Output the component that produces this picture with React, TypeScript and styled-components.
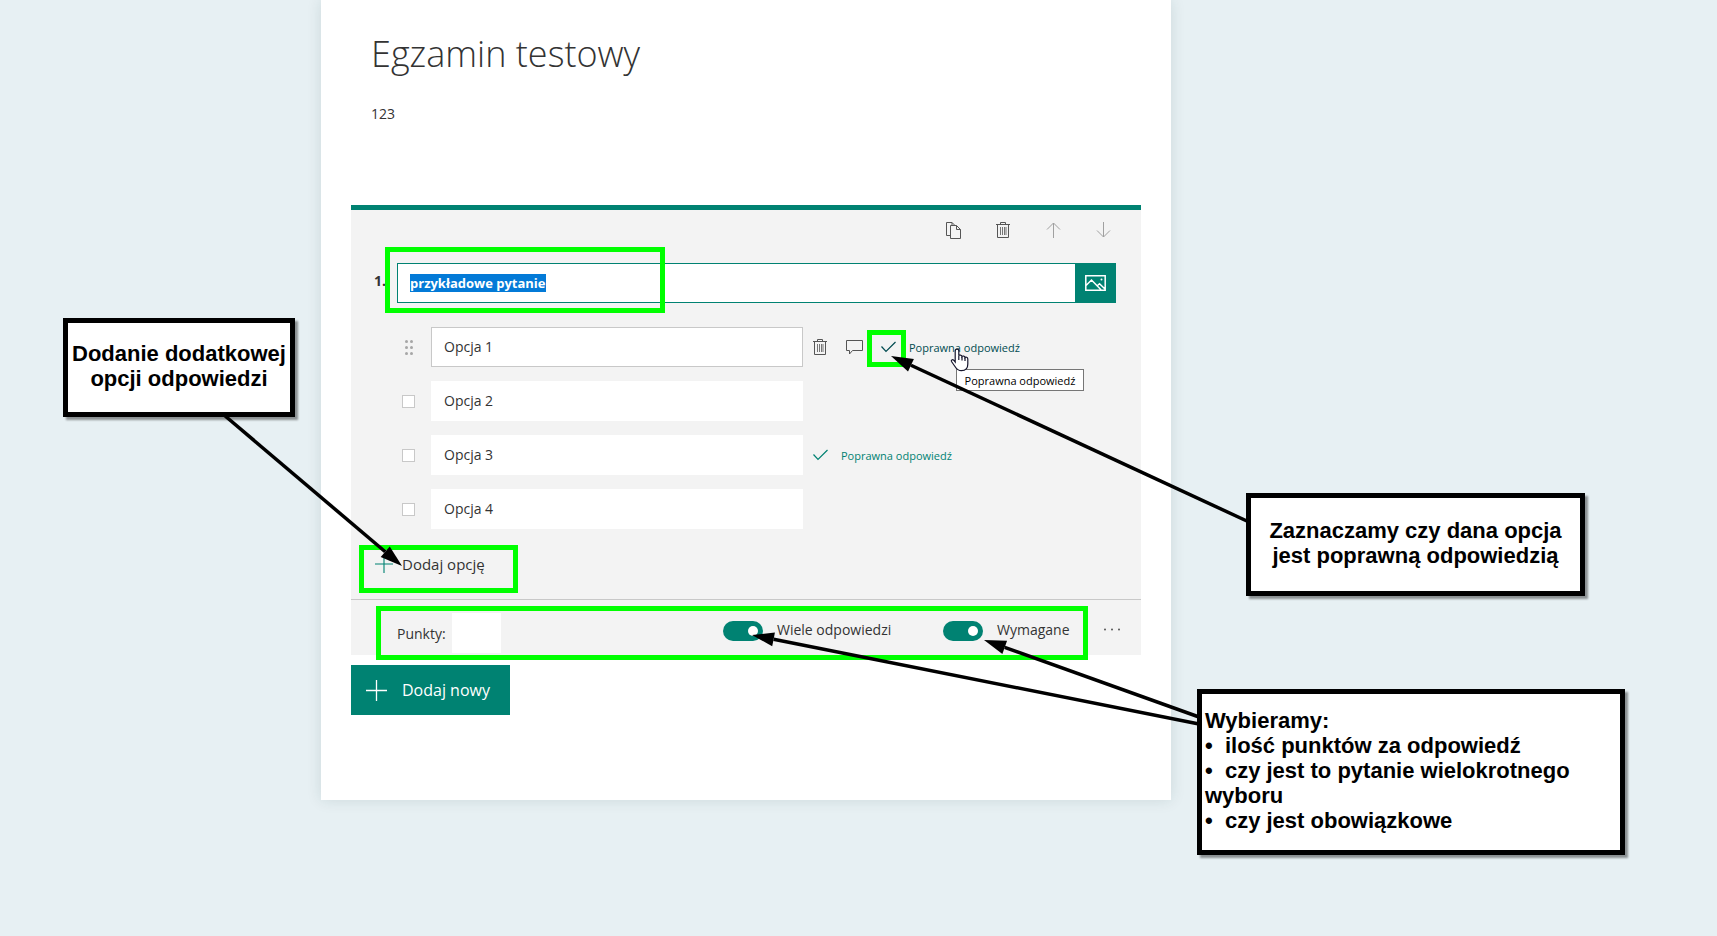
import React, { useEffect, useRef } from "react";
import styled, { createGlobalStyle, css } from "styled-components";

const teal = "#008272";
const ui = '"Open Sans", "Noto Sans", sans-serif';

const GlobalStyle = createGlobalStyle`
  *, *::before, *::after { box-sizing: border-box; }
  body {
    margin: 0;
    background: #e7f0f3;
    color: #333333;
    font-family: ${ui};
    font-size: 14px;
  }
  button, input { font: inherit; color: inherit; }
`;

const Page = styled.div`
  display: grid;
  grid-template-columns: minmax(0, 321fr) minmax(640px, 850px) minmax(0, 546fr);
  min-height: 100vh;
  align-items: start;
  overflow: hidden;
`;

const Paper = styled.main`
  grid-column: 2;
  position: relative;
  padding: 0 30px 85px;
  background: #ffffff;
  box-shadow: 0 0 14px rgba(0, 60, 60, 0.12);
`;

const FormHeader = styled.header`
  height: 205px;
  padding: 26px 20px 0;
`;

const Title = styled.h1`
  margin: 0;
  font-size: 36px;
  line-height: 56px;
  font-weight: 300;
`;

const Description = styled.p`
  margin: 20px 0 0;
  line-height: 24px;
`;

const Card = styled.section`
  border-top: 5px solid ${teal};
  background: #f3f3f3;
`;

const PlainButton = styled.button`
  display: inline-flex;
  align-items: center;
  justify-content: center;
  padding: 0;
  border: 0;
  background: transparent;
  cursor: pointer;
`;

const Toolbar = styled.div`
  display: flex;
  justify-content: flex-end;
  padding: 5px 13px 18px;
`;

const ToolButton = styled(PlainButton)`
  width: 50px;
  height: 30px;
  color: #555555;
  &:disabled { color: #a0a0a0; }
`;

const QuestionRow = styled.div`
  display: flex;
  padding-right: 25px;
`;

const QuestionNumber = styled.label`
  flex: 0 0 46px;
  padding-left: 23px;
  line-height: 36px;
  font-weight: 700;
`;

const QuestionInput = styled.input`
  flex: 1;
  min-width: 0;
  height: 40px;
  padding: 0 12px;
  border: 1px solid ${teal};
  border-right: 0;
  border-radius: 0;
  outline: 0;
  background: #ffffff;
  font-size: 13px;
  font-weight: 700;
  &::selection { background: rgba(0, 120, 215, 0.99); color: #ffffff; }
`;

const ImageButton = styled(PlainButton)`
  flex: 0 0 41px;
  height: 40px;
  background: ${teal};
  color: #ffffff;
`;

const Options = styled.ul`
  display: grid;
  gap: 14px;
  margin: 24px 0 0;
  padding: 0 0 0 51px;
  list-style: none;
`;

const OptionRow = styled.li`
  display: flex;
  align-items: center;
`;

const Handle = styled.span`
  display: flex;
  justify-content: center;
  flex: 0 0 13px;
  margin-right: 16px;
`;

const Tick = styled.input`
  appearance: none;
  width: 13px;
  height: 13px;
  margin: 0;
  border: 1px solid #c8c8c8;
  background: #ffffff;
`;

const OptionInput = styled.input<{ $outlined?: boolean }>`
  flex: 0 1 372px;
  min-width: 0;
  height: 40px;
  padding: 0 12px 2px;
  border: 1px solid ${(p) => (p.$outlined ? "#c8c8c8" : "#ffffff")};
  border-radius: 0;
  background: #ffffff;
`;

const OptionButton = styled(PlainButton)`
  width: 34px;
  height: 30px;
  color: #555555;
`;

const CorrectButton = styled(PlainButton)<{ $hover?: boolean }>`
  height: 30px;
  color: ${(p) => (p.$hover ? "#004b50" : teal)};
  font-size: 11px;
  white-space: nowrap;
`;

const CheckSlot = styled.span`
  display: flex;
  justify-content: center;
  width: 34px;
  margin-right: 4px;
`;

const AddOption = styled(PlainButton)`
  gap: 9px;
  height: 40px;
  margin: 16px 0 14px 24px;
  padding-bottom: 2px;
  font-size: 15px;
`;

const CardFooter = styled.footer`
  display: flex;
  align-items: center;
  height: 56px;
  padding: 13px 10px 2px 46px;
  border-top: 1px solid #c8c8c8;
`;

const PointsLabel = styled.label`
  flex: 0 0 55px;
`;

const PointsInput = styled.input`
  width: 49px;
  height: 40px;
  padding: 0 12px;
  border: 0;
  background: #ffffff;
`;

const Switches = styled.div`
  display: flex;
  align-self: flex-start;
  height: 32px;
  margin-left: auto;
`;

const SwitchLabel = styled.label<{ $width: number }>`
  display: flex;
  align-items: center;
  gap: 14px;
  width: ${(p) => p.$width}px;
  white-space: nowrap;
`;

const Switch = styled.input`
  appearance: none;
  display: flex;
  align-items: center;
  width: 40px;
  height: 20px;
  margin: 4px 0 0;
  padding: 0 5px;
  border-radius: 10px;
  background: #a0a0a0;
  &::before {
    content: "";
    width: 10px;
    height: 10px;
    border-radius: 50%;
    background: #ffffff;
  }
  &:checked { justify-content: flex-end; background: ${teal}; }
`;

const MoreButton = styled(PlainButton)`
  width: 38px;
  color: #555555;
`;

const AddNew = styled(PlainButton)`
  gap: 15px;
  height: 50px;
  margin-top: 10px;
  padding: 0 20px 0 15px;
  background: ${teal};
  color: #ffffff;
  font-size: 16px;
`;

/* Annotations laid over the form, placed from the sheet's top left corner. */
interface Place { $x: number; $y: number; $w: number; $h: number; }

const placed = css<Place>`
  position: absolute;
  left: ${(p) => p.$x}px;
  top: ${(p) => p.$y}px;
  width: ${(p) => p.$w}px;
  height: ${(p) => p.$h}px;
`;

const Highlight = styled.div<Place>`
  ${placed}
  border: 5px solid #00ff00;
  pointer-events: none;
`;

const Arrows = styled.svg`
  position: absolute;
  left: 0;
  top: 0;
  overflow: visible;
  pointer-events: none;
`;

const Callout = styled.aside<Place & { $left?: boolean }>`
  ${placed}
  display: flex;
  flex-direction: column;
  justify-content: center;
  padding: 0 3px 4px;
  border: 5px solid #000000;
  background: #ffffff;
  box-shadow: 3px 3px 2px rgba(0, 0, 0, 0.4);
  color: #000000;
  font: 700 22px/25px "Liberation Sans", Arial, sans-serif;
  text-align: ${(p) => (p.$left ? "left" : "center")};
  p, ul { margin: 0; padding: 0; list-style: none; }
`;

const Tooltip = styled.div<Place>`
  ${placed}
  display: flex;
  align-items: center;
  justify-content: center;
  border: 1px solid #767676;
  background: #ffffff;
  color: #000000;
  font-size: 11px;
  white-space: nowrap;
`;

const Cursor = styled.svg<Place>`
  ${placed}
  pointer-events: none;
`;

const TrashIcon = () => (
  <svg width="14" height="16" viewBox="0 0 14 16" fill="none" stroke="currentColor" aria-hidden="true">
    <path d="M0 2.500H14M4.500 2.500V.5H9.500V2.500M1.500 2.500V15.500H12.500V2.500" />
    <path d="M4.500 5V13M6.500 5V13M8.500 5V13M10 5V13" strokeOpacity="0.8" />
  </svg>
);

const CopyIcon = () => (
  <svg width="15" height="17" viewBox="0 0 15 17" fill="none" stroke="currentColor" aria-hidden="true">
    <path d="M4.500 13.500H.5V.5H6L8.500 3M4.500 3.500H10.500L14.500 7.500V16.500H4.500ZM10.500 3.500V7.500H14.500M6 .5V3.500" />
  </svg>
);

const ArrowIcon = ({ down }: { down?: boolean }) => (
  <svg width="15" height="16" viewBox="0 0 15 16" fill="none" stroke="currentColor" aria-hidden="true">
    <path d={down ? "M7.500 0V15M1 8.500L7.500 15L14 8.500" : "M7.500 16V1M1 7.500L7.500 1L14 7.500"} />
  </svg>
);

const ImageIcon = () => (
  <svg width="21" height="16" viewBox="0 0 21 16" fill="none" stroke="currentColor" strokeWidth="1.500" aria-hidden="true">
    <path d="M.8.8H20.200V15.200H.8ZM1 10.500L6.500 5L16 14.800M12 11L14.500 8.800L20 14" />
    <circle cx="16.500" cy="4.500" r="1" fill="currentColor" stroke="none" />
  </svg>
);

const CommentIcon = () => (
  <svg width="17" height="15" viewBox="0 0 17 15" fill="none" stroke="currentColor" aria-hidden="true">
    <path d="M.5.5H16.500V10.500H6.500L3.500 14V10.500H.5Z" />
  </svg>
);

const CheckIcon = () => (
  <svg width="15" height="12" viewBox="0 0 15 12" fill="none" stroke="currentColor" strokeWidth="1.200" aria-hidden="true">
    <path d="M.5 5.500L5 10.500L14.500 1" />
  </svg>
);

const PlusIcon = ({ size }: { size: number }) => (
  <svg width={size} height={size} viewBox="0 0 21 21" fill="none" stroke="currentColor" strokeWidth="1.300" aria-hidden="true">
    <path d="M10.500 0V21M0 10.500H21" />
  </svg>
);

const TealPlus = styled.span`
  display: flex;
  color: ${teal};
`;

const DragIcon = () => (
  <svg width="8" height="15" viewBox="0 0 8 15" fill="#a6a6a6" aria-hidden="true">
    {[1.5, 7.5, 13.5].map((y) => [1.5, 6.5].map((x) => <circle key={`${x}-${y}`} cx={x} cy={y} r="1.500" />))}
  </svg>
);

const DotsIcon = () => (
  <svg width="18" height="3" viewBox="0 0 18 3" fill="currentColor" aria-hidden="true">
    <circle cx="2" cy="1.500" r="1" /><circle cx="9" cy="1.500" r="1" /><circle cx="16" cy="1.500" r="1" />
  </svg>
);

const Arrow = ({ from, to }: { from: [number, number]; to: [number, number] }) => {
  const length = Math.hypot(to[0] - from[0], to[1] - from[1]);
  const ux = (to[0] - from[0]) / length;
  const uy = (to[1] - from[1]) / length;
  const bx = to[0] - ux * 22;
  const by = to[1] - uy * 22;
  return (
    <g>
      <line x1={from[0]} y1={from[1]} x2={bx} y2={by} stroke="#000" strokeWidth="3.500" />
      <polygon
        fill="#000"
        points={`${to[0]},${to[1]} ${bx - uy * 7},${by + ux * 7} ${bx + uy * 7},${by - ux * 7}`}
      />
    </g>
  );
};

const Correct = ({ hover }: { hover?: boolean }) => (
  <CorrectButton type="button" $hover={hover}>
    <CheckSlot><CheckIcon /></CheckSlot>
    Poprawna odpowiedź
  </CorrectButton>
);

export default function App() {
  const question = useRef<HTMLInputElement>(null);

  useEffect(() => {
    question.current?.focus();
    question.current?.select();
  }, []);

  return (
    <>
      <GlobalStyle />
      <Page>
        <Paper>
          <FormHeader>
            <Title>Egzamin testowy</Title>
            <Description>123</Description>
          </FormHeader>

          <Card>
            <Toolbar>
              <ToolButton type="button" aria-label="Kopiuj"><CopyIcon /></ToolButton>
              <ToolButton type="button" aria-label="Usuń"><TrashIcon /></ToolButton>
              <ToolButton type="button" aria-label="W górę" disabled><ArrowIcon /></ToolButton>
              <ToolButton type="button" aria-label="W dół" disabled><ArrowIcon down /></ToolButton>
            </Toolbar>

            <QuestionRow>
              <QuestionNumber htmlFor="question">1.</QuestionNumber>
              <QuestionInput id="question" ref={question} defaultValue="przykładowe pytanie" />
              <ImageButton type="button" aria-label="Wstaw obraz"><ImageIcon /></ImageButton>
            </QuestionRow>

            <Options>
              {[1, 2, 3, 4].map((n) => (
                <OptionRow key={n}>
                  <Handle>
                    {n === 1 ? <DragIcon /> : <Tick type="checkbox" aria-label={`Opcja ${n}`} />}
                  </Handle>
                  <OptionInput $outlined={n === 1} defaultValue={`Opcja ${n}`} aria-label={`Opcja ${n}`} />
                  {n === 1 && (
                    <>
                      <OptionButton type="button" aria-label="Usuń opcję"><TrashIcon /></OptionButton>
                      <OptionButton type="button" aria-label="Komentarz"><CommentIcon /></OptionButton>
                      <Correct hover />
                    </>
                  )}
                  {n === 3 && <Correct />}
                </OptionRow>
              ))}
            </Options>

            <AddOption type="button">
              <TealPlus><PlusIcon size={18} /></TealPlus>
              Dodaj opcję
            </AddOption>

            <CardFooter>
              <PointsLabel htmlFor="points">Punkty:</PointsLabel>
              <PointsInput id="points" />
              <Switches>
                <SwitchLabel $width={220}>
                  <Switch type="checkbox" role="switch" defaultChecked />
                  Wiele odpowiedzi
                </SwitchLabel>
                <SwitchLabel $width={150}>
                  <Switch type="checkbox" role="switch" defaultChecked />
                  Wymagane
                </SwitchLabel>
                <MoreButton type="button" aria-label="Więcej"><DotsIcon /></MoreButton>
              </Switches>
            </CardFooter>
          </Card>

          <AddNew type="button">
            <PlusIcon size={21} />
            Dodaj nowy
          </AddNew>

          <Highlight $x={64} $y={247} $w={280} $h={66} />
          <Highlight $x={546} $y={330} $w={39} $h={37} />
          <Highlight $x={38} $y={545} $w={159} $h={48} />
          <Highlight $x={55} $y={606} $w={712} $h={54} />

          <Tooltip role="tooltip" $x={635} $y={369} $w={128} $h={22}>Poprawna odpowiedź</Tooltip>

          <Cursor $x={629} $y={348} $w={19} $h={24} viewBox="0 0 19 24" aria-hidden="true">
            <path
              d="M7 1.200C8.200 1.200 8.800 2 8.800 3V7.500C9 6.900 12 7 12 8.500C12.500 7.700 15 7.900 15 9.500C15.600 8.800 17.800 9 17.800 11V16C17.800 20 15.500 22.700 11.500 22.700C8 22.700 6.500 21 5 18.500L1.500 13.500C.8 12.300 2.400 11 3.700 12.200L5.200 14V3C5.200 2 5.800 1.200 7 1.200Z"
              fill="#fff"
              stroke="#14142b"
              strokeWidth="1.200"
            />
            <path d="M8.800 7.500V12M12 8.500V12.500M15 9.500V13" stroke="#14142b" strokeWidth="1.200" />
          </Cursor>

          <Arrows width="1" height="1" aria-hidden="true">
            <Arrow from={[-97, 415]} to={[81, 566]} />
            <Arrow from={[928, 522]} to={[570, 356]} />
            <Arrow from={[878, 717]} to={[663, 640]} />
            <Arrow from={[878, 724]} to={[431, 635]} />
          </Arrows>

          <Callout $x={-258} $y={318} $w={232} $h={99}>
            <p>Dodanie dodatkowej<br />opcji odpowiedzi</p>
          </Callout>
          <Callout $x={925} $y={493} $w={339} $h={103}>
            <p>Zaznaczamy czy dana opcja<br />jest poprawną odpowiedzią</p>
          </Callout>
          <Callout $left $x={876} $y={689} $w={428} $h={166}>
            <p>Wybieramy:</p>
            <ul>
              <li>•&nbsp;&nbsp;ilość punktów za odpowiedź</li>
              <li>•&nbsp;&nbsp;czy jest to pytanie wielokrotnego wyboru</li>
              <li>•&nbsp;&nbsp;czy jest obowiązkowe</li>
            </ul>
          </Callout>
        </Paper>
      </Page>
    </>
  );
}
